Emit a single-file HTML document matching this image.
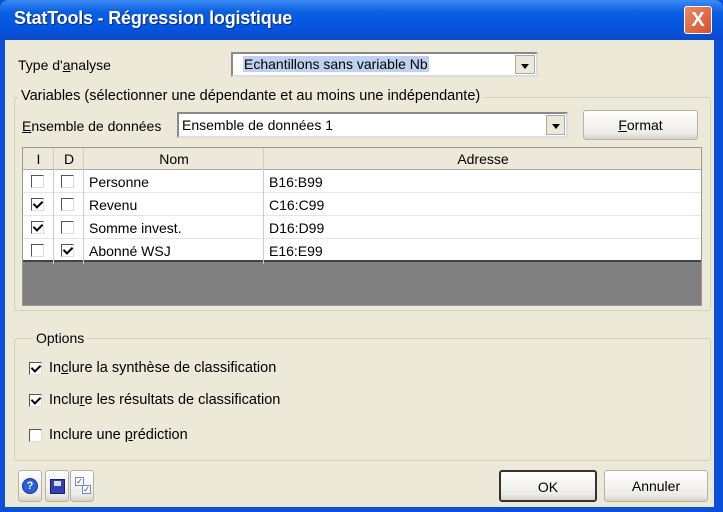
<!DOCTYPE html>
<html><head><meta charset="utf-8"><style>
*{margin:0;padding:0;box-sizing:border-box}
body{width:723px;height:512px;overflow:hidden;background:#0a4fd8;font-family:"Liberation Sans",sans-serif;font-size:14px;color:#000;position:relative}
.a{position:absolute}
.title{left:0;top:0;width:723px;height:40px;background:linear-gradient(#3d8bf5,#0a5fe0 30%,#0554e0 70%,#0a49c8);border-radius:8px 8px 0 0}
.title span{position:absolute;left:14px;top:8px;color:#fff;font-weight:bold;font-size:18px;letter-spacing:-0.2px;text-shadow:1px 1px #0a2a80}
.close{left:684px;top:6px;width:28px;height:28px;background:linear-gradient(135deg,#e88a6c,#d9502a);border:1px solid #fff;border-radius:3px;color:#fff;font-weight:bold;font-size:20px;text-align:center;line-height:26px}
.body{left:5px;top:40px;width:709px;height:467px;background:#ece9d8}
.cb{width:13px;height:13px;border:1px solid #1c5180;background:#fff;position:absolute}
.cb.k::after{content:"";position:absolute;left:3px;top:0px;width:4px;height:7px;border:solid #000;border-width:0 2px 2px 0;transform:rotate(45deg)}
.tcb{border-color:#555;border-width:1px;border-right-color:#ddd;border-bottom-color:#ddd}
.group{border:1px solid #d0d0bf;border-radius:3px}
.legend{background:#ece9d8;padding:0 3px;position:absolute}
.btn{border:1px solid #003c74;border-radius:3px;background:linear-gradient(#fff,#ecebe6 80%,#d6d0c5);text-align:center}
.combo{background:#fff;border:1px solid #7f9db9}
.arr{position:absolute;right:1px;top:1px;bottom:1px;width:19px;background:#ece9d8;border:1px solid #aaa}
.arr::after{content:"";position:absolute;left:5px;top:8px;border:4px solid transparent;border-top:5px solid #000}
.row{position:absolute;left:0;width:679px;height:23px;background:#fff;border-bottom:1px solid #e4e4e4}
</style></head><body>
<div class="a title"><span>StatTools - Régression logistique</span></div>
<div class="a close">X</div>
<div class="a body"></div>

<div class="a" style="left:18px;top:57px">Type d'<u>a</u>nalyse</div>
<div class="a combo" style="left:231px;top:52px;width:307px;height:25px;border:2px inset #ddd;background:#fff">
 <span style="position:absolute;left:10px;top:2px;background:#bcd2ee;padding:0 1px">Echantillons sans variable Nb</span>
 <div class="arr" style="width:20px"></div></div>

<div class="a group" style="left:14px;top:97px;width:697px;height:214px"></div>
<div class="a legend" style="left:18px;top:88px;font-size:14.5px">Variables (sélectionner une dépendante et au moins une indépendante)</div>
<div class="a" style="left:22px;top:118px"><u>E</u>nsemble de données</div>
<div class="a combo" style="left:177px;top:112px;width:391px;height:26px;border:2px inset #ddd">
 <span style="position:absolute;left:3px;top:3px">Ensemble de données 1</span><div class="arr"></div></div>
<div class="a btn" style="left:583px;top:110px;width:115px;height:30px;border-color:#b5b2a6;line-height:28px"><u>F</u>ormat</div>

<div class="a" style="left:22px;top:147px;width:680px;height:159px;background:#808080;border:1px solid #999;overflow:hidden">
 <div style="position:absolute;left:0;top:0;width:680px;height:22px;background:#ece9d8;border-bottom:1px solid #aaa"></div>
 <div class="a" style="left:0;top:3px;width:31px;text-align:center">I</div>
 <div class="a" style="left:31px;top:3px;width:30px;text-align:center">D</div>
 <div class="a" style="left:61px;top:3px;width:180px;text-align:center">Nom</div>
 <div class="a" style="left:241px;top:3px;width:438px;text-align:center">Adresse</div>
 <div class="row" style="top:22px"></div><div class="row" style="top:45px"></div><div class="row" style="top:68px"></div><div class="row" style="top:91px;border-bottom:2px solid #444"></div>
 <div class="a" style="left:30px;top:0;width:1px;height:116px;background:#ccc"></div>
 <div class="a" style="left:60px;top:0;width:1px;height:116px;background:#ccc"></div>
 <div class="a" style="left:240px;top:0;width:1px;height:116px;background:#ccc"></div>
 <div class="cb tcb" style="left:8px;top:27px"></div><div class="cb tcb" style="left:38px;top:27px"></div>
 <div class="cb tcb k" style="left:8px;top:50px"></div><div class="cb tcb" style="left:38px;top:50px"></div>
 <div class="cb tcb k" style="left:8px;top:73px"></div><div class="cb tcb" style="left:38px;top:73px"></div>
 <div class="cb tcb" style="left:8px;top:96px"></div><div class="cb tcb k" style="left:38px;top:96px"></div>
 <div class="a" style="left:66px;top:26px">Personne</div><div class="a" style="left:246px;top:26px">B16:B99</div>
 <div class="a" style="left:66px;top:49px">Revenu</div><div class="a" style="left:246px;top:49px">C16:C99</div>
 <div class="a" style="left:66px;top:72px">Somme invest.</div><div class="a" style="left:246px;top:72px">D16:D99</div>
 <div class="a" style="left:66px;top:95px">Abonné WSJ</div><div class="a" style="left:246px;top:95px">E16:E99</div>
</div>

<div class="a group" style="left:14px;top:338px;width:697px;height:123px"></div>
<div class="a legend" style="left:33px;top:330px">Options</div>
<div class="cb tcb k" style="left:29px;top:362px"></div><div class="a" style="left:49px;top:360px;font-size:14.5px">In<u>c</u>lure la synthèse de classification</div>
<div class="cb tcb k" style="left:29px;top:394px"></div><div class="a" style="left:49px;top:392px;font-size:14.5px">Inclu<u>r</u>e les résultats de classification</div>
<div class="cb tcb" style="left:29px;top:429px"></div><div class="a" style="left:49px;top:427px;font-size:14.5px">Inclure une <u>p</u>rédiction</div>

<div class="a btn" style="left:18px;top:470px;width:24px;height:32px;border-color:#b5b2a6"><div style="margin:7px auto;width:16px;height:16px;border-radius:50%;background:#2b5ed8;border:1px solid #123a9a;color:#fff;font-size:11px;font-weight:bold;line-height:14px">?</div></div>
<div class="a btn" style="left:45px;top:470px;width:24px;height:32px;border-color:#b5b2a6"><div style="margin:8px auto;width:15px;height:15px;background:#3240b0;border:1px solid #1a2070;position:relative"><div style="position:absolute;left:3px;top:1px;width:7px;height:5px;background:#ddd"></div></div></div>
<div class="a btn" style="left:70px;top:470px;width:24px;height:32px;border-color:#b5b2a6"><div style="position:absolute;left:4px;top:6px;width:9px;height:9px;border:1px solid #6a8ac8;background:#fff;font-size:8px;line-height:8px;color:#1a3aa0">✓</div><div style="position:absolute;left:11px;top:14px;width:9px;height:9px;border:1px solid #6a8ac8;background:#fff;font-size:8px;line-height:8px;color:#1a3aa0">✓</div></div>
<div class="a btn" style="left:499px;top:470px;width:98px;height:32px;line-height:30px;border:2px solid #333">OK</div>
<div class="a btn" style="left:604px;top:470px;width:104px;height:32px;line-height:30px;border-color:#b5b2a6">Annuler</div>
</body></html>
